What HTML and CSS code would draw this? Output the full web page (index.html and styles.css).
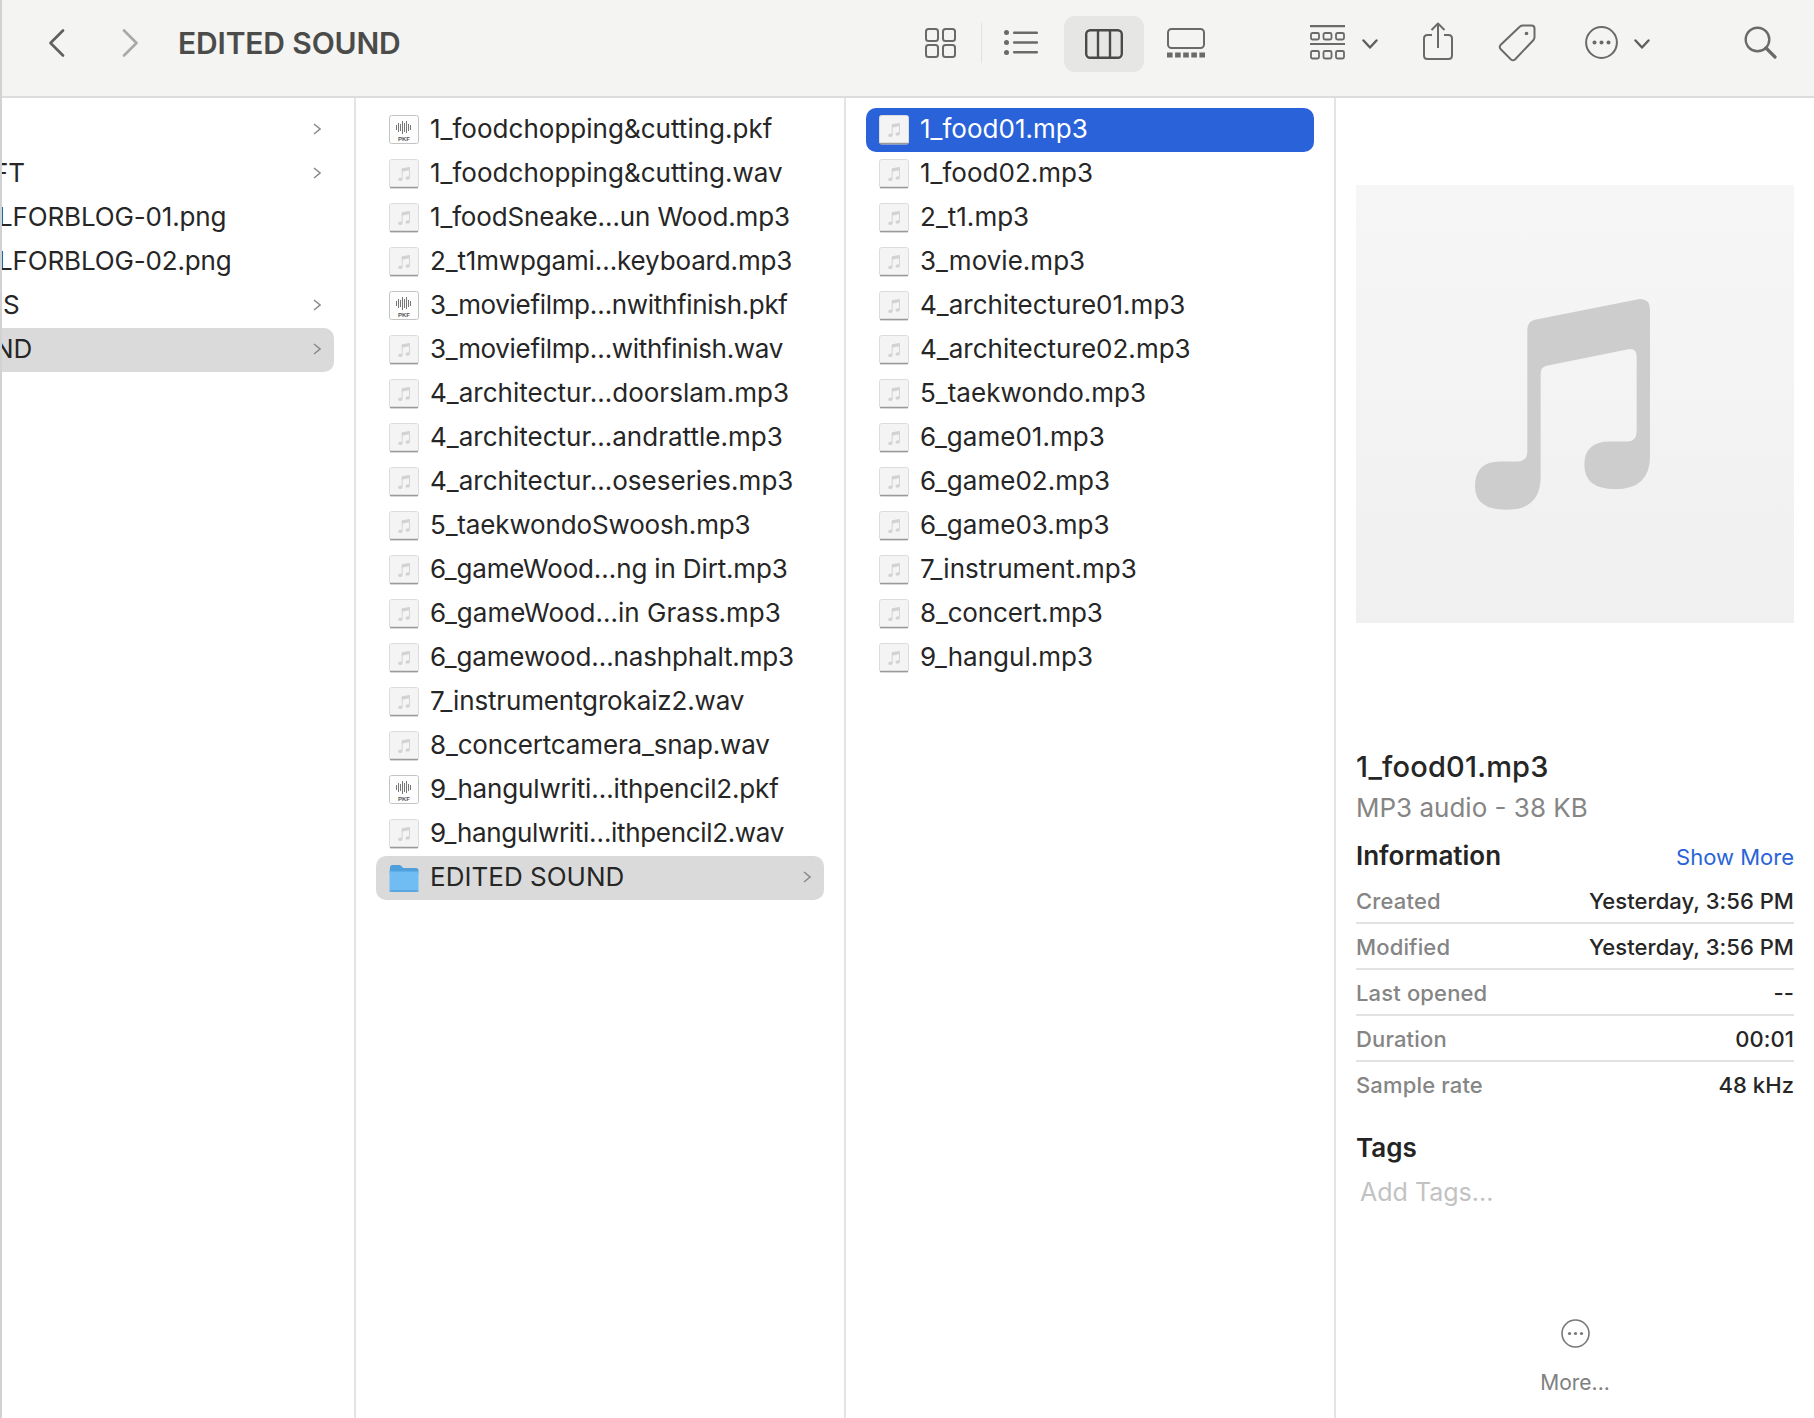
FILE: index.html
```html
<!DOCTYPE html>
<html lang="en">
<head>
<meta charset="utf-8">
<title>EDITED SOUND</title>
<link rel="stylesheet" href="styles.css">
</head>
<body>
<svg class="defs" width="0" height="0" aria-hidden="true">
  <defs>
    <symbol id="note" viewBox="200 100 570 670">
      <path d="M382 210Q382 185 405 180L715 118Q750 115 750 150L750 590Q750 688 645 688Q553 688 553 615Q553 545 630 545L680 545Q710 545 710 515L710 290Q710 265 685 268L440 318Q422 322 422 340L422 650Q422 750 320 750Q225 750 225 680Q225 605 300 605L350 605Q382 605 382 575Z"/>
    </symbol>
    <symbol id="audio" viewBox="0 0 30 30">
      <rect x=".5" y=".5" width="29" height="28.5" rx="2" fill="#f4f4f4" stroke="#dcdcdc"/>
      <path d="M1 28.5H29" stroke="#9a9a9a" stroke-width="1.5"/>
      <use href="#note" x="8" y="7.5" width="14" height="15" fill="#d2d2d2"/>
    </symbol>
    <symbol id="pkf" viewBox="0 0 30 30">
      <rect x=".5" y=".5" width="29" height="28" rx="2" fill="#fdfdfd" stroke="#c4c4c4"/>
      <path d="M7.500 10v5M9.500 8v9M11.500 9v7M13.500 6v13M15.500 8v9M17.500 6v12M19.500 9v7M21.500 10v5" stroke="#666" stroke-width=".9" fill="none"/>
      <text x="15" y="25.500" text-anchor="middle" class="pkf-text">PKF</text>
    </symbol>
    <symbol id="chev" viewBox="0 0 8 12">
      <path d="M1 1l6 5-6 5" fill="none" stroke="#8a8a8a" stroke-width="1.5"/>
    </symbol>
  </defs>
</svg>
<div class="window">
  <header class="toolbar">
    <svg class="tb back" width="17" height="28" viewBox="0 0 17 28"><path d="M15 1.500L2.500 14 15 26.500" fill="none" stroke="#5f5f5d" stroke-width="2.600" stroke-linecap="round" stroke-linejoin="round"/></svg>
    <svg class="tb forward" width="17" height="28" viewBox="0 0 17 28"><path d="M2 1.500L14.500 14 2 26.500" fill="none" stroke="#a9a9a7" stroke-width="2.600" stroke-linecap="round" stroke-linejoin="round"/></svg>
    <h1 class="title">EDITED SOUND</h1>
    <svg class="tb view-grid" width="31" height="30" viewBox="0 0 31 30" fill="none" stroke="#6a6a68" stroke-width="2"><rect x="1" y="1" width="12" height="12" rx="2.500"/><rect x="18" y="1" width="12" height="12" rx="2.500"/><rect x="1" y="17" width="12" height="12" rx="2.500"/><rect x="18" y="17" width="12" height="12" rx="2.500"/></svg>
    <span class="tb-sep"></span>
    <svg class="tb view-list" width="34" height="25" viewBox="0 0 34 25" fill="#6a6a68"><circle cx="2.500" cy="2.500" r="2.500"/><circle cx="2.500" cy="12.500" r="2.500"/><circle cx="2.500" cy="22.500" r="2.500"/><rect x="9" y="1.500" width="25" height="2.400" rx="1"/><rect x="9" y="11.300" width="25" height="2.400" rx="1"/><rect x="9" y="21.100" width="25" height="2.400" rx="1"/></svg>
    <span class="view-active">
      <svg width="38" height="30" viewBox="0 0 38 30" fill="none" stroke="#4a4a48" stroke-width="2.400"><rect x="1.200" y="1.200" width="35.600" height="27.600" rx="4"/><path d="M13 1.200V28.800M25 1.200V28.800"/></svg>
    </span>
    <svg class="tb view-gallery" width="38" height="30" viewBox="0 0 38 30"><rect x="1" y="1" width="36" height="19" rx="3.500" fill="none" stroke="#6a6a68" stroke-width="2"/><path d="M0 27h38" stroke="#6a6a68" stroke-width="5" stroke-dasharray="5.600 2.500"/></svg>
    <svg class="tb group" width="35" height="35" viewBox="0 0 35 35" fill="none" stroke="#6a6a68"><path d="M0 1.200H35M0 19H35" stroke-width="2.200"/><g stroke-width="1.800"><rect x="1" y="8" width="8" height="6.500" rx="1.500"/><rect x="13.500" y="8" width="8" height="6.500" rx="1.500"/><rect x="26" y="8" width="8" height="6.500" rx="1.500"/><rect x="1" y="26" width="8" height="7.500" rx="1.500"/><rect x="13.500" y="26" width="8" height="7.500" rx="1.500"/><rect x="26" y="26" width="8" height="7.500" rx="1.500"/></g></svg>
    <svg class="tb chev-group" width="16" height="10" viewBox="0 0 16 10"><path d="M1.500 1.500L8 8.500 14.500 1.500" fill="none" stroke="#5f5f5d" stroke-width="2.400" stroke-linecap="round" stroke-linejoin="round"/></svg>
    <svg class="tb share" width="30" height="38" viewBox="0 0 30 38" fill="none" stroke="#6a6a68" stroke-width="2"><path d="M9 13H4.500Q1 13 1 16.500V33.500Q1 37 4.500 37H25.500Q29 37 29 33.500V16.500Q29 13 25.500 13H21"/><path d="M15 26V2M8.500 8L15 1.500 21.500 8" stroke-linejoin="round"/></svg>
    <svg class="tb tag" width="38" height="38" viewBox="0 0 38 38" fill="none" stroke="#6a6a68" stroke-width="2"><path d="M22 2.500Q23 1.500 25 1.500L33.500 1.500Q36.500 1.500 36.500 4.500V13Q36.500 15 35.500 16L17 35.500Q15 37 13 35.500L2.500 25Q1 23 2.500 21Z" stroke-linejoin="round"/><circle cx="28.500" cy="9.500" r="1.800" fill="#6a6a68" stroke="none"/></svg>
    <svg class="tb more" width="33" height="33" viewBox="0 0 33 33"><circle cx="16.500" cy="16.500" r="15.400" fill="none" stroke="#6a6a68" stroke-width="2"/><circle cx="9.500" cy="16.500" r="2" fill="#6a6a68"/><circle cx="16.500" cy="16.500" r="2" fill="#6a6a68"/><circle cx="23.500" cy="16.500" r="2" fill="#6a6a68"/></svg>
    <svg class="tb chev-more" width="16" height="10" viewBox="0 0 16 10"><path d="M1.500 1.500L8 8.500 14.500 1.500" fill="none" stroke="#5f5f5d" stroke-width="2.400" stroke-linecap="round" stroke-linejoin="round"/></svg>
    <svg class="tb search" width="33" height="33" viewBox="0 0 33 33" fill="none" stroke="#6a6a68"><circle cx="13.500" cy="13.500" r="11.800" stroke-width="2.400"/><path d="M22 22l9 9" stroke-width="3.200" stroke-linecap="round"/></svg>
  </header>
  <main class="browser">
    <section class="col col-first">
      <div class="row"><svg class="chev" width="8" height="12"><use href="#chev"/></svg></div>
      <div class="row"><span class="name clip-ft">FT</span><svg class="chev" width="8" height="12"><use href="#chev"/></svg></div>
      <div class="row"><span class="name clip-l tight">LFORBLOG-01.png</span></div>
      <div class="row"><span class="name clip-l tight">LFORBLOG-02.png</span></div>
      <div class="row"><span class="name clip-s">S</span><svg class="chev" width="8" height="12"><use href="#chev"/></svg></div>
      <div class="row row-path"><span class="name clip-nd">ND</span><svg class="chev" width="8" height="12"><use href="#chev"/></svg></div>
    </section>
    <section class="col">
      <div class="row"><svg class="ficon" width="30" height="30"><use href="#pkf"/></svg><span class="name">1_foodchopping&amp;cutting.pkf</span></div>
      <div class="row"><svg class="ficon" width="30" height="30"><use href="#audio"/></svg><span class="name">1_foodchopping&amp;cutting.wav</span></div>
      <div class="row"><svg class="ficon" width="30" height="30"><use href="#audio"/></svg><span class="name tight">1_foodSneake…un Wood.mp3</span></div>
      <div class="row"><svg class="ficon" width="30" height="30"><use href="#audio"/></svg><span class="name tight">2_t1mwpgami…keyboard.mp3</span></div>
      <div class="row"><svg class="ficon" width="30" height="30"><use href="#pkf"/></svg><span class="name tighter">3_moviefilmp…nwithfinish.pkf</span></div>
      <div class="row"><svg class="ficon" width="30" height="30"><use href="#audio"/></svg><span class="name tighter">3_moviefilmp…withfinish.wav</span></div>
      <div class="row"><svg class="ficon" width="30" height="30"><use href="#audio"/></svg><span class="name">4_architectur…doorslam.mp3</span></div>
      <div class="row"><svg class="ficon" width="30" height="30"><use href="#audio"/></svg><span class="name">4_architectur…andrattle.mp3</span></div>
      <div class="row"><svg class="ficon" width="30" height="30"><use href="#audio"/></svg><span class="name">4_architectur…oseseries.mp3</span></div>
      <div class="row"><svg class="ficon" width="30" height="30"><use href="#audio"/></svg><span class="name tight">5_taekwondoSwoosh.mp3</span></div>
      <div class="row"><svg class="ficon" width="30" height="30"><use href="#audio"/></svg><span class="name tight">6_gameWood…ng in Dirt.mp3</span></div>
      <div class="row"><svg class="ficon" width="30" height="30"><use href="#audio"/></svg><span class="name">6_gameWood…in Grass.mp3</span></div>
      <div class="row"><svg class="ficon" width="30" height="30"><use href="#audio"/></svg><span class="name tight">6_gamewood…nashphalt.mp3</span></div>
      <div class="row"><svg class="ficon" width="30" height="30"><use href="#audio"/></svg><span class="name tight">7_instrumentgrokaiz2.wav</span></div>
      <div class="row"><svg class="ficon" width="30" height="30"><use href="#audio"/></svg><span class="name tight">8_concertcamera_snap.wav</span></div>
      <div class="row"><svg class="ficon" width="30" height="30"><use href="#pkf"/></svg><span class="name tight">9_hangulwriti…ithpencil2.pkf</span></div>
      <div class="row"><svg class="ficon" width="30" height="30"><use href="#audio"/></svg><span class="name tighter">9_hangulwriti…ithpencil2.wav</span></div>
      <div class="row row-path">
        <svg class="ficon" width="30" height="30" viewBox="0 0 30 30"><path d="M1 4.500Q1 2 3.500 2H10Q12 2 13 3.500L14 5H27Q29.500 5 29.500 7.500V10H.5Z" fill="#4f9fdc"/><path d="M.5 8.500H29.500V27Q29.500 29 27 29H3Q.5 29 .5 27Z" fill="#6fbdf2"/><path d="M.5 28H29.500" stroke="#4a8fc8" stroke-width="1"/></svg>
        <span class="name">EDITED SOUND</span>
        <svg class="chev" width="8" height="12"><use href="#chev"/></svg>
      </div>
    </section>
    <section class="col">
      <div class="row row-selected"><svg class="ficon" width="30" height="30"><use href="#audio"/></svg><span class="name">1_food01.mp3</span></div>
      <div class="row"><svg class="ficon" width="30" height="30"><use href="#audio"/></svg><span class="name">1_food02.mp3</span></div>
      <div class="row"><svg class="ficon" width="30" height="30"><use href="#audio"/></svg><span class="name">2_t1.mp3</span></div>
      <div class="row"><svg class="ficon" width="30" height="30"><use href="#audio"/></svg><span class="name">3_movie.mp3</span></div>
      <div class="row"><svg class="ficon" width="30" height="30"><use href="#audio"/></svg><span class="name">4_architecture01.mp3</span></div>
      <div class="row"><svg class="ficon" width="30" height="30"><use href="#audio"/></svg><span class="name">4_architecture02.mp3</span></div>
      <div class="row"><svg class="ficon" width="30" height="30"><use href="#audio"/></svg><span class="name">5_taekwondo.mp3</span></div>
      <div class="row"><svg class="ficon" width="30" height="30"><use href="#audio"/></svg><span class="name">6_game01.mp3</span></div>
      <div class="row"><svg class="ficon" width="30" height="30"><use href="#audio"/></svg><span class="name">6_game02.mp3</span></div>
      <div class="row"><svg class="ficon" width="30" height="30"><use href="#audio"/></svg><span class="name">6_game03.mp3</span></div>
      <div class="row"><svg class="ficon" width="30" height="30"><use href="#audio"/></svg><span class="name">7_instrument.mp3</span></div>
      <div class="row"><svg class="ficon" width="30" height="30"><use href="#audio"/></svg><span class="name tight">8_concert.mp3</span></div>
      <div class="row"><svg class="ficon" width="30" height="30"><use href="#audio"/></svg><span class="name">9_hangul.mp3</span></div>
    </section>
    <aside class="preview">
      <div class="artwork"><svg class="art-note" width="175" height="211" viewBox="225 118 525 632"><use href="#note" x="200" y="100" width="570" height="670"/></svg></div>
      <h2 class="file-name">1_food01.mp3</h2>
      <p class="file-kind">MP3 audio - 38 KB</p>
      <div class="info-head"><h3 class="section-title">Information</h3><span class="show-more">Show More</span></div>
      <dl class="info">
        <div class="info-row"><dt>Created</dt><dd>Yesterday, 3:56 PM</dd></div>
        <div class="info-row"><dt>Modified</dt><dd>Yesterday, 3:56 PM</dd></div>
        <div class="info-row"><dt>Last opened</dt><dd>--</dd></div>
        <div class="info-row"><dt>Duration</dt><dd>00:01</dd></div>
        <div class="info-row"><dt>Sample rate</dt><dd>48 kHz</dd></div>
      </dl>
      <h3 class="section-title tags-title">Tags</h3>
      <div class="add-tags">Add Tags...</div>
      <div class="more-action">
        <svg width="29" height="29" viewBox="0 0 29 29"><circle cx="14.500" cy="14.500" r="13.500" fill="none" stroke="#777" stroke-width="1.600"/><circle cx="8.500" cy="14.500" r="1.600" fill="#777"/><circle cx="14.500" cy="14.500" r="1.600" fill="#777"/><circle cx="20.500" cy="14.500" r="1.600" fill="#777"/></svg>
        <span>More...</span>
      </div>
    </aside>
  </main>
</div>
</body>
</html>
```
FILE: styles.css
```css
* { box-sizing: border-box; }
html, body { margin: 0; padding: 0; height: 100%; overflow: hidden; }
body { font-family: Inter, "Liberation Sans", sans-serif; background: #fff; color: #222; }
.defs { display: block; height: 0; }
.pkf-text { font: 700 6px "Liberation Sans", sans-serif; fill: #555; }
.window { height: 1418px; display: flex; flex-direction: column; border-left: 2px solid #d2d2d2; }

.toolbar { height: 98px; flex: none; display: flex; align-items: center; padding-bottom: 11px; background: #f4f4f2; border-bottom: 2px solid #dcdcdc; }
.tb { flex: none; display: block; }
.back { margin-left: 46px; }
.forward { margin-left: 57px; }
.title { margin: 0 0 0 39px; width: 224px; font-size: 30px; font-weight: 600; color: #4b4b49; white-space: nowrap; letter-spacing: -.15px; }
.view-grid { margin-left: 523px; }
.tb-sep { width: 1px; height: 40px; margin-left: 25px; background: #e2e2e0; }
.view-list { margin-left: 22px; }
.view-active { width: 80px; height: 56px; margin-left: 26px; margin-top: 2px; display: flex; align-items: center; justify-content: center; background: #e6e6e4; border-radius: 11px; }
.view-gallery { margin-left: 23px; }
.group { margin-left: 105px; }
.chev-group { margin-left: 17px; margin-top: 2px; }
.share { margin-left: 45px; margin-top: -3px; }
.tag { margin-left: 45px; }
.more { margin-left: 49px; }
.chev-more { margin-left: 16px; margin-top: 2px; }
.search { margin-left: 94px; }

.browser { flex: 1; display: flex; min-height: 0; }
.col { width: 490px; flex: none; padding: 10px 20px 0; border-right: 2px solid #e4e4e4; overflow: hidden; }
.col-first { width: 354px; padding-left: 0; }
.row { height: 44px; display: flex; align-items: center; padding-left: 13px; padding-right: 13px; border-radius: 10px; }
.col-first .row { margin-left: -12px; padding-left: 12px; }
.ficon { flex: none; display: block; margin-bottom: 1px; }
.name { margin-left: 11px; padding-bottom: 4px; font-size: 26px; letter-spacing: .02px; color: #262626; white-space: nowrap; }
.name.tight { letter-spacing: -.15px; }
.name.tighter { letter-spacing: -.33px; }
.chev { margin-left: auto; margin-bottom: 2px; flex: none; }
.row-path { background: #dadada; }
.row-selected { background: #2a62da; }
.row-selected .name { color: #fff; }
.col-first .name.clip-ft { margin-left: -9px; }
.col-first .name.clip-l { margin-left: -4px; }
.col-first .name.clip-s { margin-left: 1px; }
.col-first .name.clip-nd { margin-left: -8px; }

.preview { flex: 1; min-width: 0; padding: 87px 20px 0; position: relative; }
.artwork { height: 438px; display: flex; align-items: center; justify-content: center; background: linear-gradient(#f6f6f6, #f0f0f0); }
.art-note { fill: #cdcdcd; margin-right: 25px; }
.file-name { margin: 126px 0 0; font-size: 29px; font-weight: 500; line-height: 36px; color: #262626; letter-spacing: .2px; }
.file-kind { margin: 5px 0 0; font-size: 26px; line-height: 36px; color: #858585; }
.info-head { display: flex; align-items: baseline; justify-content: space-between; margin-top: 12px; }
.section-title { margin: 0; font-size: 26px; font-weight: 600; line-height: 36px; color: #242424; }
.show-more { font-size: 22px; color: #2a64d6; }
.info { margin: 4px 0 0; }
.info-row { height: 46px; display: flex; align-items: center; justify-content: space-between; border-bottom: 2px solid #e2e2e2; padding-top: 2px; }
.info-row:last-child { border-bottom: none; padding-top: 0; }
.info dt { font-size: 22px; font-weight: 500; letter-spacing: .15px; color: #858585; }
.info dd { margin: 0; font-size: 22px; font-weight: 500; color: #262626; letter-spacing: .05px; }
.tags-title { margin-top: 22px; }
.add-tags { margin: 8px 0 0 4px; font-size: 25px; line-height: 36px; color: #c2c2c2; }
.more-action { margin-top: 109px; display: flex; flex-direction: column; align-items: center; gap: 22px; }
.more-action svg { display: block; }
.more-action span { font-size: 21px; line-height: 26px; color: #808080; }
```
